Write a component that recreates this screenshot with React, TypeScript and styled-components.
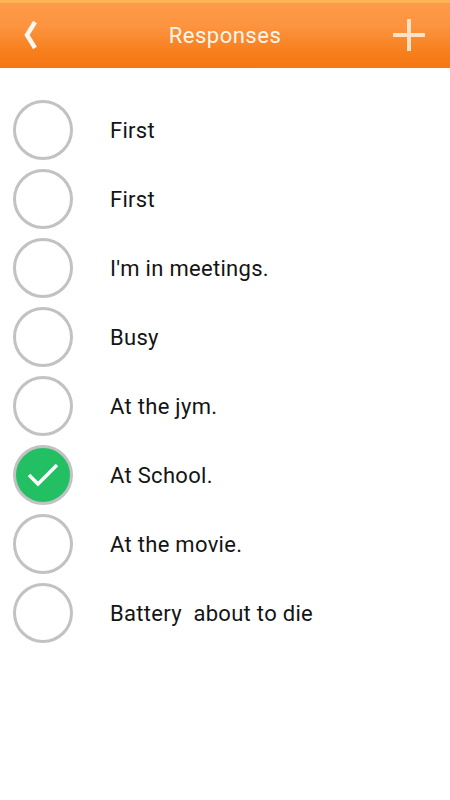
import React from "react";
import styled, { createGlobalStyle } from "styled-components";

const Global = createGlobalStyle`
  html, body { margin: 0; padding: 0; background: #ffffff; }
  body { font-family: Roboto, "Noto Sans", sans-serif; }
`;

const Page = styled.div`
  width: 450px;
  min-height: 800px;
  background: #ffffff;
`;

const Header = styled.header`
  height: 68px;
  display: grid;
  grid-template-columns: 80px 1fr 80px;
  align-items: center;
  padding: 0 0 1px 0;
  box-sizing: border-box;
  border-top: 3px solid #ffb356;
  background: linear-gradient(to bottom, #fd9a48 0%, #fc9440 35%, #f77f1c 75%, #f57613 100%);
`;

const IconButton = styled.button<{ $side: "left" | "right" }>`
  width: 40px;
  height: 40px;
  display: flex;
  align-items: center;
  justify-content: center;
  background: none;
  border: none;
  padding: 0;
  justify-self: ${(p) => (p.$side === "left" ? "start" : "end")};
  margin: ${(p) => (p.$side === "left" ? "0 0 0 11px" : "0 21px 0 0")};
`;

const Title = styled.h1`
  margin: 0;
  text-align: center;
  font-family: Roboto, sans-serif;
  font-weight: 400;
  font-size: 22px;
  color: #fff6ec;
  letter-spacing: 0.5px;
`;

const List = styled.ul`
  list-style: none;
  margin: 0;
  padding: 27px 0 0 0;
`;

const Row = styled.li`
  height: 69px;
  display: flex;
  align-items: center;
  padding-left: 13px;
`;

const Radio = styled.span<{ $checked?: boolean }>`
  width: 60px;
  height: 60px;
  box-sizing: border-box;
  border-radius: 50%;
  border: 3px solid #c2c2c2;
  background: ${(p) => (p.$checked ? "#22c063" : "#ffffff")};
  display: flex;
  align-items: center;
  justify-content: center;
  flex-shrink: 0;
`;

const Label = styled.span`
  margin-left: 37px;
  padding-top: 1px;
  font-family: Roboto, sans-serif;
  font-size: 22px;
  letter-spacing: 0.3px;
  color: #141414;
  white-space: pre;
`;

const items = [
  { text: "First" },
  { text: "First" },
  { text: "I'm in meetings." },
  { text: "Busy" },
  { text: "At the jym." },
  { text: "At School.", checked: true },
  { text: "At the movie." },
  { text: "Battery  about to die" },
];

export default function App() {
  return (
    <Page>
      <Global />
      <Header>
        <IconButton $side="left" aria-label="Back">
          <svg width="14" height="28" viewBox="0 0 14 28">
            <path d="M11 1 L3 14 L11 27" fill="none" stroke="#fff7ee" strokeWidth="4.5" strokeLinejoin="miter" />
          </svg>
        </IconButton>
        <Title>Responses</Title>
        <IconButton $side="right" aria-label="Add">
          <svg width="34" height="34" viewBox="0 0 34 34">
            <path d="M17 1 V33 M1 17 H33" fill="none" stroke="#fde1c6" strokeWidth="4" />
          </svg>
        </IconButton>
      </Header>
      <List>
        {items.map((it, i) => (
          <Row key={i}>
            <Radio $checked={it.checked}>
              {it.checked && (
                <svg width="34" height="26" viewBox="0 0 34 26">
                  <path d="M3 13 L12 22 L31 3" fill="none" stroke="#ffffff" strokeWidth="3.5" />
                </svg>
              )}
            </Radio>
            <Label>{it.text}</Label>
          </Row>
        ))}
      </List>
    </Page>
  );
}
